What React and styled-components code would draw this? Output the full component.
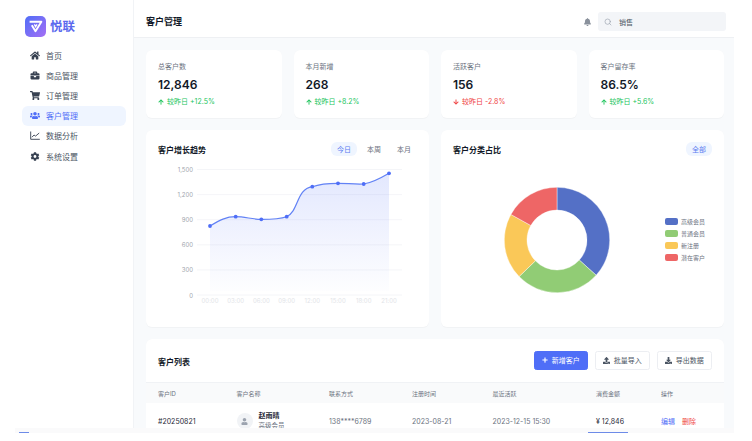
import styled, { createGlobalStyle } from "styled-components";
import {
  FaHome,
  FaBriefcase,
  FaShoppingCart,
  FaUsers,
  FaCog,
  FaBell,
  FaUser,
  FaPlus,
  FaUpload,
  FaDownload,
  FaArrowUp,
  FaArrowDown,
} from "react-icons/fa";
import { FiSearch } from "react-icons/fi";

const GlobalStyle = createGlobalStyle`
  html, body {
    margin: 0;
    padding: 0;
    background: #fff;
    overflow: hidden;
  }
  * {
    box-sizing: border-box;
  }
  body {
    font-family: Inter, "Noto Sans CJK SC", sans-serif;
  }
`;

function ChartIcon() {
  return (
    <svg viewBox="0 0 10 9" fill="none" stroke="currentColor" strokeWidth="0.9">
      <path d="M0.7 0.5V8.3H9.8" />
      <path d="M2 6.2L4 4L5.6 5.1L9.2 2" />
    </svg>
  );
}

const navItems = [
  { label: "首页", icon: FaHome },
  { label: "商品管理", icon: FaBriefcase },
  { label: "订单管理", icon: FaShoppingCart },
  { label: "客户管理", icon: FaUsers, active: true },
  { label: "数据分析", icon: ChartIcon },
  { label: "系统设置", icon: FaCog },
];

const stats = [
  { label: "总客户数", value: "12,846", delta: "较昨日 +12.5%" },
  { label: "本月新增", value: "268", delta: "较昨日 +8.2%" },
  { label: "活跃客户", value: "156", delta: "较昨日 -2.8%", down: true },
  { label: "客户留存率", value: "86.5%", delta: "较昨日 +5.6%" },
];

const legend = [
  { label: "高级会员", color: "#5470c6" },
  { label: "普通会员", color: "#91cc75" },
  { label: "新注册", color: "#fac858" },
  { label: "潜在客户", color: "#ee6666" },
];

const columns = ["客户ID", "客户名称", "联系方式", "注册时间", "最近活跃", "消费金额", "操作"];
const template = "78.5px 92.5px 83px 80.5px 103.5px 65px 1fr";

function LineChart() {
  const ticks = ["1,500", "1,200", "900", "600", "300", "0"];
  const hours = ["00:00", "03:00", "06:00", "09:00", "12:00", "15:00", "18:00", "21:00"];
  const pts = [
    [64, 57],
    [89.7, 47.7],
    [115.3, 50.3],
    [140.7, 47.7],
    [166.3, 17.7],
    [192, 14.3],
    [217.7, 15],
    [243, 4.3],
  ];
  const line =
    "M64 57C74 51 80 47.7 89.7 47.7C99 47.7 106 50.3 115.3 50.3C124 50.3 134 50 140.7 47.7C153 42 150 20 166.3 17.7C175 14.5 183 14.3 192 14.3C201 14.3 209 15.5 217.7 15C226 14 235 9 243 4.3";
  return (
    <svg width="283" height="150" viewBox="0 -6 283 150">
      <defs>
        <linearGradient id="area" x1="0" y1="0" x2="0" y2="1">
          <stop offset="0" stopColor="#4f6ef7" stopOpacity="0.16" />
          <stop offset="1" stopColor="#4f6ef7" stopOpacity="0.01" />
        </linearGradient>
      </defs>
      {ticks.map((t, i) => (
        <g key={t}>
          <line x1="51" x2="256" y1={i * 25.1 + 0.5} y2={i * 25.1 + 0.5} stroke="#f1f2f6" strokeWidth="0.8" />
          <text x="47" y={i * 25.1 + 3} fontSize="6" textAnchor="end" fill="#a1a5ad" fontFamily="Inter">
            {t}
          </text>
        </g>
      ))}
      <path d={`${line}L243 122L64 122Z`} fill="url(#area)" />
      <path d={line} fill="none" stroke="#6282f5" strokeWidth="1.2" />
      {pts.map(([x, y]) => (
        <circle key={x} cx={x} cy={y} r="1.9" fill="#4f6ef7" />
      ))}
      {hours.map((h, i) => (
        <text key={h} x={pts[i][0]} y="134" fontSize="6" textAnchor="middle" fill="#e2e4e8" fontFamily="Inter">
          {h}
        </text>
      ))}
    </svg>
  );
}

function polar(r, deg) {
  const a = ((deg - 90) * Math.PI) / 180;
  return [r * Math.cos(a), r * Math.sin(a)];
}

function Donut() {
  const stops = [0, 132, 226, 299, 360];
  return (
    <svg width="108" height="108" viewBox="-54 -54 108 108">
      {legend.map((item, i) => {
        const [ax, ay] = polar(52.7, stops[i]);
        const [bx, by] = polar(52.7, stops[i + 1]);
        const [cx, cy] = polar(30, stops[i + 1]);
        const [dx, dy] = polar(30, stops[i]);
        const large = stops[i + 1] - stops[i] > 180 ? 1 : 0;
        return (
          <path
            key={item.label}
            d={`M${ax} ${ay}A52.7 52.7 0 ${large} 1 ${bx} ${by}L${cx} ${cy}A30 30 0 ${large} 0 ${dx} ${dy}Z`}
            fill={item.color}
            stroke="#fff"
            strokeWidth="0.4"
          />
        );
      })}
    </svg>
  );
}

export default function App() {
  return (
    <>
      <GlobalStyle />
      <Shell>
        <Sidebar>
          <Brand>
            <Logo>
              <svg width="15" height="13" viewBox="0 0 15 13" fill="none" stroke="#fff">
                <path d="M1.6 1.8H13.4L7.5 11.2L3.8 5.2" strokeWidth="1.9" strokeLinejoin="round" />
                <path d="M6.4 4.4L7.6 6.6L9 4.4" strokeWidth="1.3" />
              </svg>
            </Logo>
            <BrandName>悦联</BrandName>
          </Brand>
          <Nav>
            {navItems.map(({ label, icon: Icon, active }) => (
              <NavItem key={label} $active={active}>
                <Icon />
                <span>{label}</span>
              </NavItem>
            ))}
          </Nav>
        </Sidebar>
        <Main>
          <Header>
            <PageTitle>客户管理</PageTitle>
            <HeaderTools>
              <BellIcon />
              <SearchBox>
                <FiSearch size={8} color="#9ca3af" />
                <span>销售</span>
              </SearchBox>
            </HeaderTools>
          </Header>
          <Content>
            <StatGrid>
              {stats.map((s) => (
                <StatCard key={s.label}>
                  <StatLabel>{s.label}</StatLabel>
                  <StatValue>{s.value}</StatValue>
                  <StatDelta $down={s.down}>
                    {s.down ? <FaArrowDown size={6} /> : <FaArrowUp size={6} />}
                    {s.delta}
                  </StatDelta>
                </StatCard>
              ))}
            </StatGrid>
            <ChartGrid>
              <ChartCard>
                <CardHead>
                  <CardTitle>客户增长趋势</CardTitle>
                  <Tabs>
                    <Tab $active>今日</Tab>
                    <Tab>本周</Tab>
                    <Tab>本月</Tab>
                  </Tabs>
                </CardHead>
                <LineChartWrap>
                  <LineChart />
                </LineChartWrap>
              </ChartCard>
              <ChartCard>
                <CardHead>
                  <CardTitle>客户分类占比</CardTitle>
                  <Tab $active>全部</Tab>
                </CardHead>
                <DonutWrap>
                  <Donut />
                  <Legend>
                    {legend.map((item) => (
                      <LegendRow key={item.label}>
                        <Swatch $color={item.color} />
                        {item.label}
                      </LegendRow>
                    ))}
                  </Legend>
                </DonutWrap>
              </ChartCard>
            </ChartGrid>
            <TableCard>
              <TableTop>
                <CardTitle>客户列表</CardTitle>
                <Actions>
                  <ActionButton $primary>
                    <FaPlus size={6} />
                    新增客户
                  </ActionButton>
                  <ActionButton>
                    <FaUpload size={7} />
                    批量导入
                  </ActionButton>
                  <ActionButton>
                    <FaDownload size={7} />
                    导出数据
                  </ActionButton>
                </Actions>
              </TableTop>
              <HeadRow>
                {columns.map((c) => (
                  <span key={c}>{c}</span>
                ))}
              </HeadRow>
              <DataRow>
                <Strong>#20250821</Strong>
                <Person>
                  <Avatar>
                    <FaUser size={7} />
                  </Avatar>
                  <div>
                    <PersonName>赵雨晴</PersonName>
                    <PersonRole>高级会员</PersonRole>
                  </div>
                </Person>
                <span>138****6789</span>
                <span>2023-08-21</span>
                <span>2023-12-15 15:30</span>
                <Strong>¥ 12,846</Strong>
                <RowActions>
                  <RowLink>编辑</RowLink>
                  <RowLink $danger>删除</RowLink>
                </RowActions>
              </DataRow>
            </TableCard>
          </Content>
        </Main>
      </Shell>
      <PageFoot>
        <FootMark $width={10} />
        <FootMark $width={40} />
      </PageFoot>
    </>
  );
}

const Shell = styled.div`
  width: 734px;
  height: 428px;
  display: flex;
  overflow: hidden;
`;

const Sidebar = styled.aside`
  width: 134px;
  flex-shrink: 0;
  background: #fff;
  border-right: 1px solid #f1f3f6;
  padding: 16px 7px 0 22px;
`;

const Brand = styled.div`
  display: flex;
  align-items: center;
  gap: 4px;
  padding-left: 3px;
`;

const Logo = styled.div`
  width: 21px;
  height: 21px;
  border-radius: 5px;
  background: linear-gradient(135deg, #4f6ef7, #a56ff5);
  display: flex;
  align-items: center;
  justify-content: center;
`;

const BrandName = styled.div`
  font-size: 12.5px;
  font-weight: 700;
  color: #5b69ee;
  line-height: 21px;
`;

const Nav = styled.nav`
  margin-top: 8px;
  display: flex;
  flex-direction: column;
`;

const NavItem = styled.div`
  height: 20.2px;
  border-radius: 6px;
  display: flex;
  align-items: center;
  gap: 6px;
  padding-left: 8px;
  font-size: 8px;
  color: ${(p) => (p.$active ? "#4f6ef7" : "#4b5563")};
  background: ${(p) => (p.$active ? "#eff5ff" : "transparent")};
  svg {
    color: ${(p) => (p.$active ? "#4f6ef7" : "#374151")};
    width: 10px;
    height: 9px;
    flex-shrink: 0;
  }
`;

const Main = styled.div`
  flex: 1;
  min-width: 0;
  display: flex;
  flex-direction: column;
  background: #f8fafc;
`;

const Header = styled.header`
  height: 38px;
  flex-shrink: 0;
  background: #fff;
  border-bottom: 1px solid #eef0f3;
  display: flex;
  align-items: center;
  justify-content: space-between;
  padding: 6px 8px 0 12px;
`;

const PageTitle = styled.h1`
  margin: 0;
  font-size: 9px;
  font-weight: 700;
  color: #111827;
`;

const HeaderTools = styled.div`
  display: flex;
  align-items: center;
  gap: 7px;
`;

const BellIcon = styled(FaBell)`
  width: 7px;
  height: 8px;
  color: #8a919c;
`;

const SearchBox = styled.div`
  width: 128px;
  height: 19px;
  background: #f3f5f8;
  border-radius: 3px;
  display: flex;
  align-items: center;
  gap: 7px;
  padding-left: 6px;
  font-size: 7px;
  color: #4b5563;
`;

const Content = styled.div`
  flex: 1;
  min-height: 0;
  overflow: hidden;
  padding: 12px 10px 0 12px;
  display: flex;
  flex-direction: column;
  gap: 12px;
`;

const StatGrid = styled.div`
  display: grid;
  grid-template-columns: repeat(4, minmax(0, 1fr));
  gap: 12px;
  flex-shrink: 0;
`;

const StatCard = styled.div`
  height: 68px;
  background: #fff;
  border-radius: 6px;
  padding: 12px;
  display: flex;
  flex-direction: column;
  box-shadow: 0 0.5px 1px rgba(15, 23, 42, 0.03);
`;

const StatLabel = styled.div`
  font-size: 7px;
  line-height: 9px;
  color: #6b7280;
`;

const StatValue = styled.div`
  margin-top: 5px;
  font-size: 12px;
  line-height: 17px;
  font-weight: 600;
  color: #111827;
`;

const StatDelta = styled.div`
  margin-top: 4px;
  display: flex;
  align-items: center;
  gap: 3px;
  font-size: 7px;
  line-height: 9px;
  color: ${(p) => (p.$down ? "#ef4444" : "#22c55e")};
`;

const ChartGrid = styled.div`
  display: grid;
  grid-template-columns: repeat(2, minmax(0, 1fr));
  gap: 12px;
  flex-shrink: 0;
`;

const ChartCard = styled.section`
  height: 197px;
  background: #fff;
  border-radius: 6px;
  padding: 12px;
  box-shadow: 0 0.5px 1px rgba(15, 23, 42, 0.03);
  display: flex;
  flex-direction: column;
`;

const CardHead = styled.div`
  display: flex;
  align-items: center;
  justify-content: space-between;
  height: 14px;
`;

const CardTitle = styled.h2`
  margin: 0;
  font-size: 8px;
  font-weight: 700;
  color: #111827;
`;

const Tabs = styled.div`
  display: flex;
  gap: 4px;
`;

const Tab = styled.span`
  height: 14px;
  padding: 0 6px;
  border-radius: 6px;
  display: inline-flex;
  align-items: center;
  font-size: 7px;
  color: ${(p) => (p.$active ? "#5b7cf0" : "#6b7280")};
  background: ${(p) => (p.$active ? "#eff5ff" : "transparent")};
`;

const LineChartWrap = styled.div`
  margin: 7px 0 0 -12px;
  svg {
    display: block;
  }
`;

const DonutWrap = styled.div`
  flex: 1;
  display: flex;
  align-items: center;
  justify-content: space-between;
  padding: 8px 7px 0 50px;
`;

const Legend = styled.div`
  display: flex;
  flex-direction: column;
  gap: 3px;
`;

const LegendRow = styled.div`
  display: flex;
  align-items: center;
  gap: 3px;
  font-size: 6px;
  line-height: 9px;
  color: #6b7280;
`;

const Swatch = styled.i`
  width: 13px;
  height: 7px;
  border-radius: 2px;
  background: ${(p) => p.$color};
`;

const TableCard = styled.section`
  flex-shrink: 0;
  background: #fff;
  border-radius: 6px 6px 0 0;
  box-shadow: 0 0.5px 1px rgba(15, 23, 42, 0.03);
`;

const TableTop = styled.div`
  height: 43px;
  padding: 1px 12px 0;
  display: flex;
  align-items: center;
  justify-content: space-between;
`;

const Actions = styled.div`
  display: flex;
  gap: 6.5px;
  margin-top: -2px;
`;

const ActionButton = styled.button`
  height: 19px;
  width: ${(p) => (p.$primary ? "54.5px" : "55.5px")};
  border-radius: 2.5px;
  border: 1px solid ${(p) => (p.$primary ? "#4f6ef7" : "#eceef2")};
  background: ${(p) => (p.$primary ? "#4f6ef7" : "#fff")};
  color: ${(p) => (p.$primary ? "#fff" : "#4b5563")};
  font-family: inherit;
  font-size: 7px;
  padding: 0;
  display: flex;
  align-items: center;
  justify-content: center;
  gap: 4px;
`;

const HeadRow = styled.div`
  height: 21px;
  padding-left: 12px;
  background: #f9fafb;
  border-top: 1px solid #f0f2f5;
  display: grid;
  grid-template-columns: ${template};
  align-items: center;
  font-size: 6px;
  color: #6b7280;
`;

const DataRow = styled.div`
  height: 36px;
  padding-left: 12px;
  display: grid;
  grid-template-columns: ${template};
  align-items: center;
  font-size: 7px;
  color: #6b7280;
`;

const Strong = styled.span`
  color: #1f2937;
`;

const Person = styled.div`
  display: flex;
  align-items: center;
  gap: 6px;
`;

const Avatar = styled.div`
  width: 16px;
  height: 16px;
  border-radius: 50%;
  background: #f1f3f6;
  color: #9ca3af;
  display: flex;
  align-items: center;
  justify-content: center;
`;

const PersonName = styled.div`
  font-size: 7px;
  line-height: 10px;
  font-weight: 700;
  color: #1f2937;
`;

const PersonRole = styled.div`
  font-size: 6.5px;
  line-height: 10px;
  color: #6b7280;
`;

const RowActions = styled.div`
  display: flex;
  gap: 7px;
`;

const RowLink = styled.span`
  color: ${(p) => (p.$danger ? "#ef4444" : "#4f6ef7")};
`;

const PageFoot = styled.div`
  width: 719px;
  height: 5px;
  margin-left: 15px;
  background: #fafafb;
  display: flex;
  justify-content: space-between;
  align-items: flex-end;
  padding: 0 106px 0 4px;
`;

const FootMark = styled.i`
  width: ${(p) => p.$width}px;
  height: 1px;
  background: #6d8be8;
`;
